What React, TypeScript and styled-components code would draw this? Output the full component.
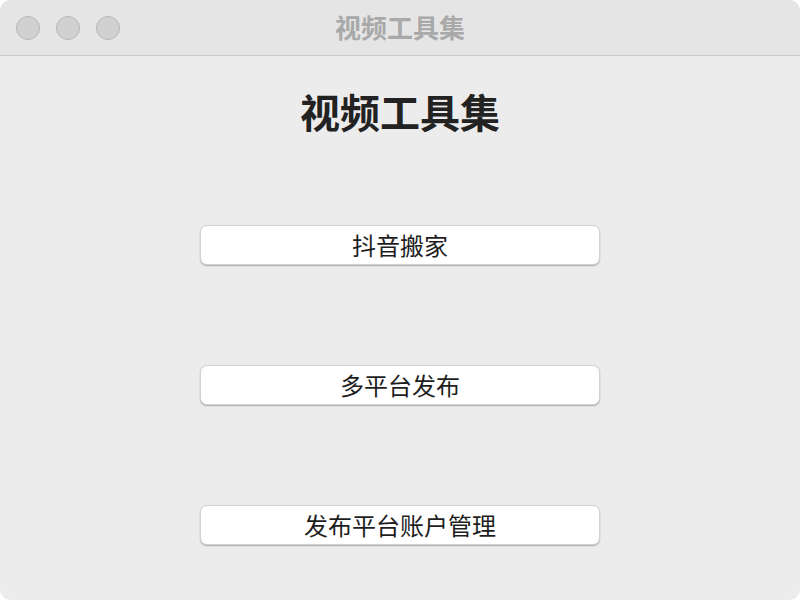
import React from "react";
import styled, { createGlobalStyle } from "styled-components";

const Global = createGlobalStyle`
  html, body { margin: 0; padding: 0; background: #ffffff; }
  body { font-family: "Noto Sans CJK SC", "Noto Sans", sans-serif; }
`;

const Window = styled.div`
  width: 800px;
  height: 600px;
  border-radius: 11px;
  overflow: hidden;
  background: #ececec;
  display: flex;
  flex-direction: column;
`;

const TitleBar = styled.div`
  height: 56px;
  flex: 0 0 56px;
  box-sizing: border-box;
  background: #e5e5e5;
  border-bottom: 1px solid #c9c9c9;
  display: grid;
  grid-template-columns: 1fr auto 1fr;
  align-items: center;
  padding: 0 16px;
`;

const Lights = styled.div`
  display: flex;
  gap: 16px;
`;

const Light = styled.span`
  width: 22px;
  height: 22px;
  border-radius: 50%;
  background: #d0d0d0;
  border: 1px solid #b8b8b8;
`;

const WinTitle = styled.div`
  font-size: 26px;
  font-weight: 700;
  color: #a9a9a9;
  line-height: 1;
  margin-top: -2px;
`;

const Content = styled.div`
  flex: 1;
  display: flex;
  flex-direction: column;
  align-items: center;
  padding-top: 31px;
`;

const Heading = styled.h1`
  margin: 0;
  font-size: 40px;
  font-weight: 700;
  color: #222222;
  line-height: 48px;
`;

const Buttons = styled.div`
  display: flex;
  flex-direction: column;
  gap: 100px;
  margin-top: 90px;
`;

const Button = styled.button`
  width: 400px;
  height: 40px;
  box-sizing: border-box;
  background: #ffffff;
  border: 0.5px solid #d2d2d2;
  border-radius: 7px;
  box-shadow: 0 1px 1.5px rgba(0, 0, 0, 0.28);
  font-family: "Noto Sans CJK SC", sans-serif;
  font-size: 24px;
  color: #1e1e1e;
  line-height: 1;
  padding: 0 0 1px;
  cursor: pointer;
`;

export default function App() {
  return (
    <>
      <Global />
      <Window>
        <TitleBar>
          <Lights>
            <Light />
            <Light />
            <Light />
          </Lights>
          <WinTitle>视频工具集</WinTitle>
          <div />
        </TitleBar>
        <Content>
          <Heading>视频工具集</Heading>
          <Buttons>
            <Button>抖音搬家</Button>
            <Button>多平台发布</Button>
            <Button>发布平台账户管理</Button>
          </Buttons>
        </Content>
      </Window>
    </>
  );
}
